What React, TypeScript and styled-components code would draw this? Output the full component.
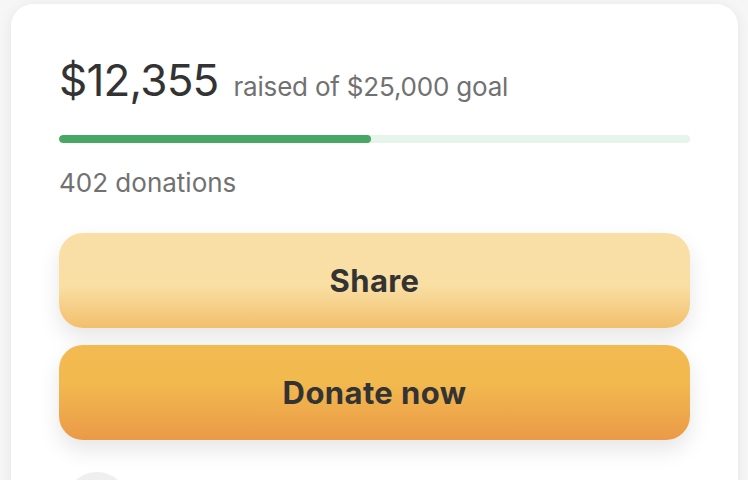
import React from 'react';
import styled, { createGlobalStyle } from 'styled-components';

const GlobalStyle = createGlobalStyle`
  body {
    margin: 0;
    background: #f6f6f6;
    font-family: Inter, 'Liberation Sans', sans-serif;
    color: #333;
  }
`;

const Page = styled.div`
  padding: 4px 10px 0 11px;
  height: 480px;
  box-sizing: border-box;
  overflow: hidden;
`;

const Card = styled.div`
  background: #fff;
  border-radius: 22px;
  box-shadow: 0 2px 14px rgba(0, 0, 0, 0.07);
  padding: 54px 48px 40px;
  height: 600px;
`;

const Headline = styled.div`
  display: flex;
  align-items: baseline;
  gap: 15px;
`;

const Amount = styled.span`
  font-size: 44px;
  line-height: 1;
  letter-spacing: -0.8px;
  color: #333;
`;

const Goal = styled.span`
  font-size: 26px;
  color: #717171;
  letter-spacing: -0.2px;
`;

const Track = styled.div`
  margin-top: 33px;
  height: 8px;
  border-radius: 4px;
  background: #e6f4ec;
  overflow: hidden;
`;

const Fill = styled.div`
  height: 100%;
  border-radius: 4px;
  background: #4aa664;
`;

const Count = styled.div`
  margin-top: 24px;
  font-size: 26px;
  line-height: 32px;
  color: #717171;
`;

const Actions = styled.div`
  margin-top: 34px;
  display: flex;
  flex-direction: column;
  gap: 17px;
`;

const Button = styled.button<{ $variant: 'share' | 'donate' }>`
  height: 95px;
  border: none;
  border-radius: 24px;
  font-family: inherit;
  font-size: 31px;
  font-weight: 700;
  letter-spacing: 0.4px;
  color: #333;
  cursor: pointer;
  box-shadow: 0 10px 22px rgba(0, 0, 0, 0.1);
  background: ${({ $variant }) =>
    $variant === 'share'
      ? 'linear-gradient(180deg, #f9dfa6 0%, #f9dfa4 55%, #f2bf6c 100%)'
      : 'linear-gradient(180deg, #f2ba50 0%, #f2b94f 40%, #eb9a48 100%)'};
`;

const Avatar = styled.div`
  margin-top: 32px;
  margin-left: 6px;
  width: 64px;
  height: 64px;
  border-radius: 50%;
  background: #efefef;
`;

export default function App() {
  const raised = 12355;
  const goal = 25000;
  const pct = (raised / goal) * 100;

  return (
    <>
      <GlobalStyle />
      <Page>
        <Card>
          <Headline>
            <Amount>$12,355</Amount>
            <Goal>raised of $25,000 goal</Goal>
          </Headline>
          <Track>
            <Fill style={{ width: `${pct}%` }} />
          </Track>
          <Count>402 donations</Count>
          <Actions>
            <Button $variant="share">Share</Button>
            <Button $variant="donate">Donate now</Button>
          </Actions>
          <Avatar />
        </Card>
      </Page>
    </>
  );
}
